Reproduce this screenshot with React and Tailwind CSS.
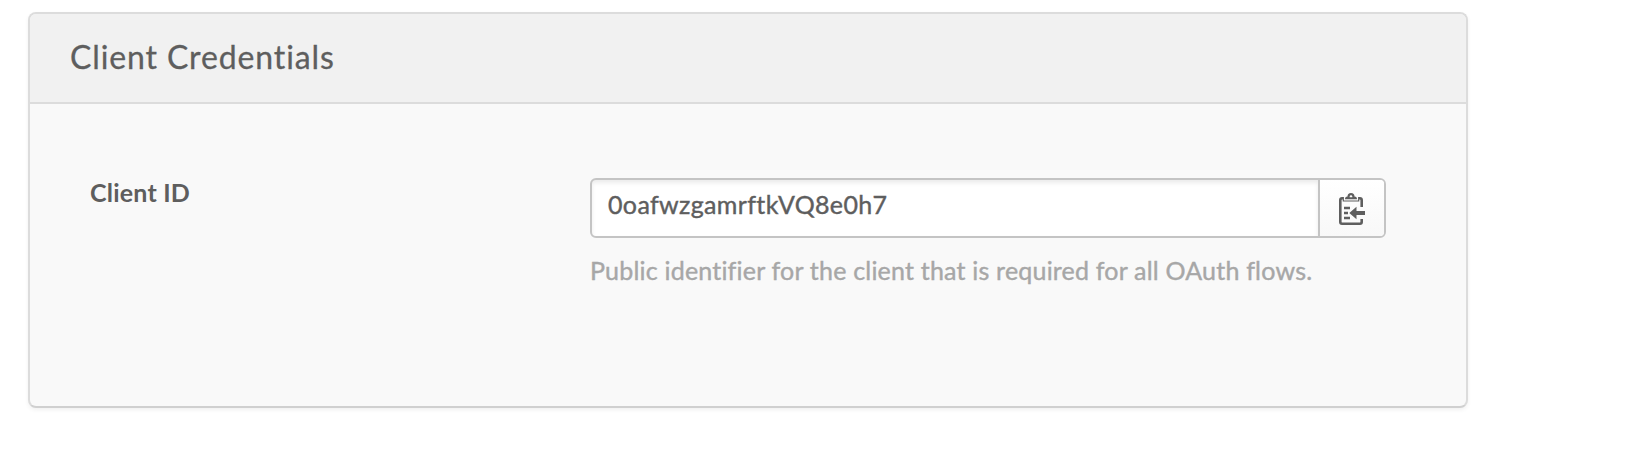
function ClipboardIcon() {
  return (
    <svg width="26" height="32" viewBox="0 0 26 32" fill="none" aria-hidden="true">
      <path d="M22.700 14V7Q22.700 5.300 21 5.300H3Q1.300 5.300 1.300 7V29Q1.300 30.700 3 30.700H21Q22.700 30.700 22.700 29V26" stroke="#5e5e5e" strokeWidth="2.600" />
      <path d="M4.300 3.500H19.700V7H4.300Z" fill="#fcfcfc" />
      <path d="M4.300 4V8H19.700V4" stroke="#5e5e5e" strokeWidth="1.200" />
      <path fillRule="evenodd" d="M8.500 3.500Q8.500 0 12 0Q15.500 0 15.500 3.500Q18 3.500 18 6.200H6Q6 3.500 8.500 3.500ZM10.700 4.300H13.300V3.300Q13.300 2.300 12 2.300Q10.700 2.300 10.700 3.300Z" fill="#5e5e5e" />
      <path d="M5 15H11M5 20H9M5 25H11" stroke="#5e5e5e" strokeWidth="2.400" />
      <path d="M10.300 20L17.500 13.800V18H26V22H17.500V26.200Z" fill="#5e5e5e" />
    </svg>
  );
}

export default function App() {
  return (
    <main className="h-[472px] bg-white pt-3 pl-7 font-[Lato,sans-serif] text-[#5e5e5e] [font-variant-ligatures:none]">
      <section className="flex h-[396px] w-[1440px] flex-col overflow-hidden rounded-lg border-2 border-[#dcdcdc] border-b-[#d0d0d0] bg-[#f9f9f9] shadow-[0_2px_4px_rgba(0,0,0,0.06)]">
        <header className="h-[90px] shrink-0 border-b-2 border-[#dcdcdc] bg-[#f1f1f1] pt-[22px] pl-10">
          <h1 className="text-[32px] leading-[42px] tracking-[0.88px] whitespace-nowrap [-webkit-text-stroke:0.3px]">Client Credentials</h1>
        </header>
        <div className="flex pt-[73px] pl-[60px]">
          <label htmlFor="client-id" className="w-[500px] shrink-0 text-[25px] leading-[30px] font-bold tracking-[0.2px]">Client ID</label>
          <div className="mt-px w-[796px]">
            <div className="flex h-[60px] overflow-hidden rounded-md border-2 border-[#c4c4c4] bg-white">
              <div id="client-id" className="flex-1 pt-[9px] pl-4 text-[25px] leading-[30px] tracking-[0.35px] whitespace-nowrap shadow-[inset_0_3px_4px_rgba(0,0,0,0.08)] [-webkit-text-stroke:0.4px]">0oafwzgamrftkVQ8e0h7</div>
              <button aria-label="Copy to clipboard" className="flex w-[66px] items-start border-l-2 border-[#c4c4c4] bg-linear-to-b from-white to-[#f8f8f8] pt-[13px] pl-[19px]">
                <ClipboardIcon />
              </button>
            </div>
            <p className="mt-[17px] text-[25px] leading-[30px] tracking-[0.2px] whitespace-nowrap text-[#a7a7a7] [-webkit-text-stroke:0.4px]">Public identifier for the client that is required for all OAuth flows.</p>
          </div>
        </div>
      </section>
    </main>
  );
}
